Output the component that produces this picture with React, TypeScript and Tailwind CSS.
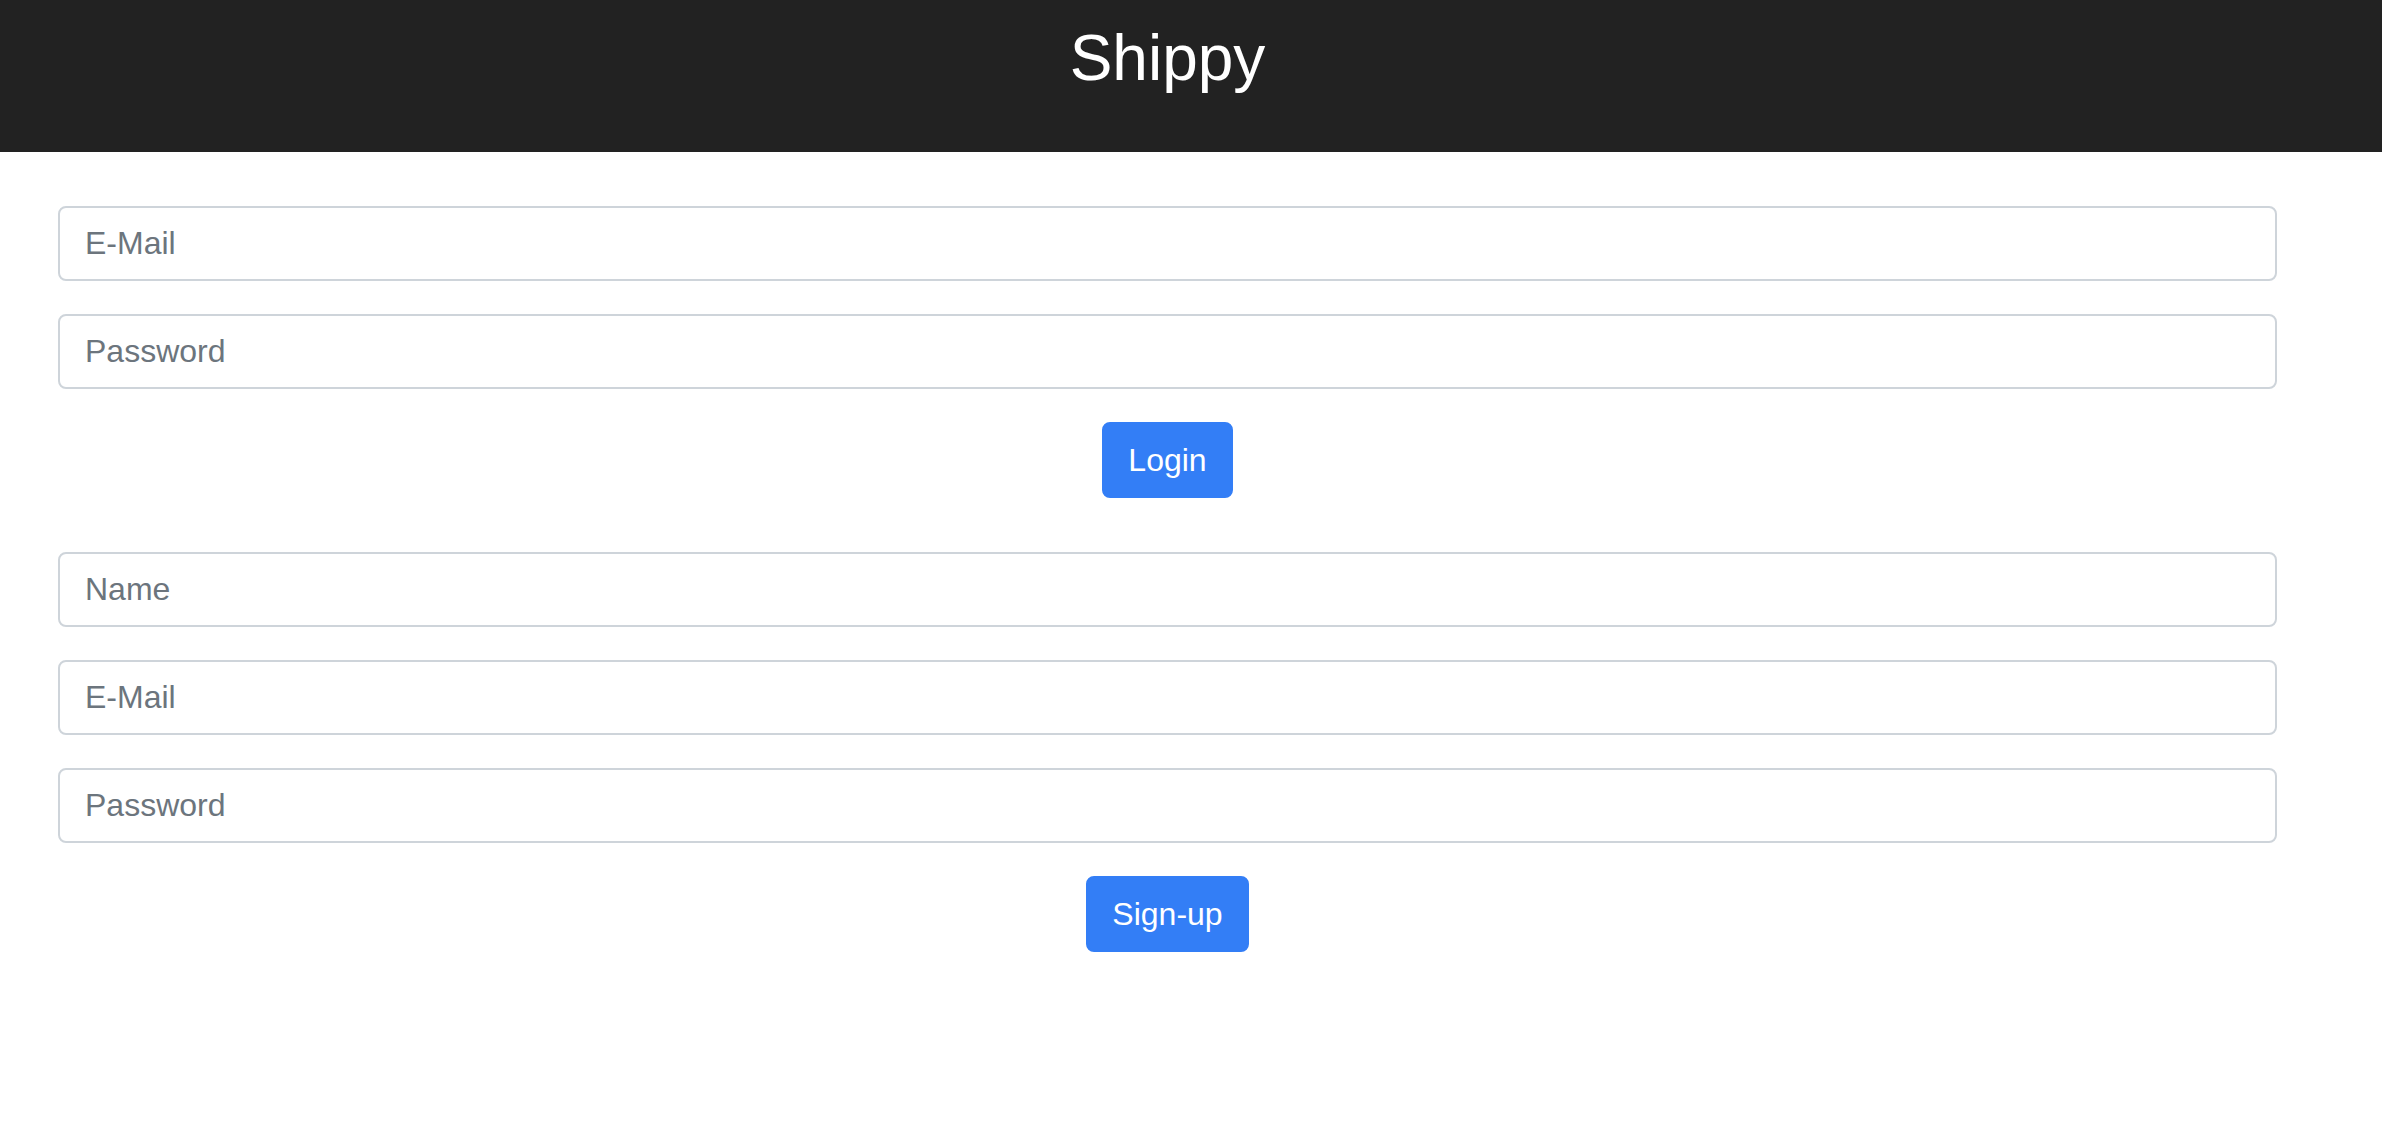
import React from "react";

const font = { fontFamily: '"Liberation Sans", Arial, Helvetica, sans-serif' };

function Field({ placeholder, type = "text" }: { placeholder: string; type?: string }) {
  return (
    <input
      type={type}
      placeholder={placeholder}
      className="block w-full h-[75px] px-[25px] border-2 border-[#ced4da] rounded-[8px] bg-white text-[32px] text-[#495057] placeholder:text-[#6c757d] outline-none"
      style={font}
    />
  );
}

function Btn({ children }: { children: React.ReactNode }) {
  return (
    <div className="flex justify-center">
      <button
        className="h-[76px] px-[24px] border-2 border-[#337ef6] rounded-[8px] bg-[#337ef6] text-white text-[32px] leading-[48px]"
        style={font}
      >
        {children}
      </button>
    </div>
  );
}

export default function App() {
  return (
    <div className="min-h-[1122px] bg-white" style={font}>
      <header className="h-[152px] bg-[#222222]">
        <div className="w-[2335px] pt-[20px] text-center text-white text-[64px] leading-[1.2]">Shippy</div>
      </header>
      <main className="w-[2335px] px-[58px] pt-[54px]">
        <form className="flex flex-col gap-[33px]" onSubmit={(e) => e.preventDefault()}>
          <Field placeholder="E-Mail" type="email" />
          <Field placeholder="Password" type="password" />
          <Btn>Login</Btn>
        </form>
        <form className="flex flex-col gap-[33px] mt-[54px]" onSubmit={(e) => e.preventDefault()}>
          <Field placeholder="Name" />
          <Field placeholder="E-Mail" type="email" />
          <Field placeholder="Password" type="password" />
          <Btn>Sign-up</Btn>
        </form>
      </main>
    </div>
  );
}
